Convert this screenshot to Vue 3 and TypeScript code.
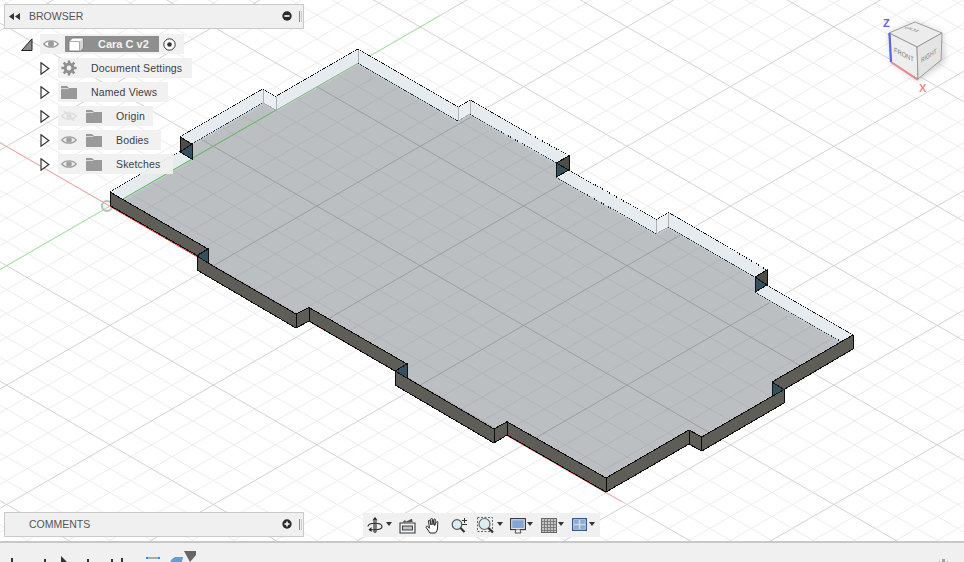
<script setup lang="ts">
const OX = 110
const OY = 206
const K = 59.7 / 103.4
const STEP = (59.7 * 2) / 5

interface GridLine { x1: number; y1: number; x2: number; y2: number; major: boolean }

function buildGrid(): GridLine[] {
  const out: GridLine[] = []
  for (let i = -60; i <= 60; i++) {
    const major = i % 5 === 0
    // goes down to the right
    const a = OY - OX * K + i * STEP
    out.push({ x1: 0, y1: a, x2: 964, y2: a + 964 * K, major })
    // goes up to the right
    const b = OY + OX * K + i * STEP
    out.push({ x1: 0, y1: b, x2: 964, y2: b - 964 * K, major })
  }
  return out
}
const grid = buildGrid()
const minor = grid.filter((l) => !l.major)
const major = grid.filter((l) => l.major)

const face =
  '123,199.5 192,159 192,144 263,103 276,110 358,63 458,121 470,114 556,163 556,177 656,234 668.6,227 755,277 755,292 841,341.5 772,382 772,396.5 701.7,437 689,430 606,478 507,421.7 494,429 407,378 407,364 309,307.5 296,314 208,263 208,249'

const pale = [
  '110,192 180,151.7 192,159 123,199.5',
  '180,137 263,89 263,103 192,144',
  '276,96.5 358,49 358,63 276,110',
  '358,49 458,107 458,121 358,63',
  '470,100 569,156 556,163 470,114',
  '569,170 656,219.5 656,234 556,177',
  '668.6,212.5 767,270 755,277 668.6,227',
  '767,285 853,335 841,341.5 755,292',
]
const paleNotches = [
  '263,89 276,96.5 276,110 263,103',
  '458,107 470,100 470,114 458,121',
  '656,219.5 668.6,212.5 668.6,227 656,234',
]
const walls = [
  '110,192 208,249 197,255.5 110,205.5',
  '197,256 208,263 296,314 296,328 197,270',
  '296,314 309,307.5 309,321 296,328',
  '309,307.5 407,364 395,371 309,321',
  '395,371 407,378 494,429 494,443 395,385',
  '494,429 507,421.7 507,435 494,443',
  '507,421.7 606,478 606,492 507,435',
  '606,478 689,430 689,444 606,492',
  '689,430 701.7,437 701.7,451 689,444',
  '701.7,437 784,389.5 784,403 701.7,451',
  '772,382 853,335 853,349 784,389.5',
]
const darkTris = ['180,137 192,144 180,152', '569,156 569,170 556,163', '767,270 767,285 755,277']
const tealTris = [
  '180,152 192,144 192,159',
  '556,163 569,170 556,177',
  '755,277 767,285 755,292',
  '208,249 208,263 197,256',
  '407,364 407,378 395,371',
  '772,382 784,389.5 772,396.5',
]
const topEdges = [
  '110,192 180,151.7',
  '180,137 263,89 276,96.5 358,49 458,107 470,100 569,156',
  '569,170 656,219.5 668.6,212.5 767,270',
  '767,285 853,335',
]
const lowEdges = [
  '192,144 263,103',
  '358,63 458,121',
  '470,114 556,163',
  '556,177 656,234',
  '668.6,227 755,277',
  '755,292 841,341.5',
]
const notchEdges = [
  '263,89 263,103 276,110 276,96.5',
  '458,107 458,121 470,114 470,100',
  '656,219.5 656,234 668.6,227 668.6,212.5',
  '358,49 358,63',
]

interface TreeRow { label: string; eye?: 'on' | 'off'; icon: 'gear' | 'folder'; pad: number }
const rows: TreeRow[] = [
  { label: 'Document Settings', icon: 'gear', pad: 10 },
  { label: 'Named Views', icon: 'folder', pad: 11 },
  { label: 'Origin', eye: 'off', icon: 'folder', pad: 8 },
  { label: 'Bodies', eye: 'on', icon: 'folder', pad: 12 },
  { label: 'Sketches', eye: 'on', icon: 'folder', pad: 13 },
]
</script>

<template>
  <div class="app">
    <div class="viewport">
      <svg class="scene" width="964" height="541" viewBox="0 0 964 541">
        <defs>
          <clipPath id="faceClip"><polygon :points="face" /></clipPath>
          <filter id="soft" x="-10%" y="-10%" width="120%" height="120%"><feGaussianBlur stdDeviation="1.8" /></filter>
          <filter id="cubeShadow" x="-30%" y="-30%" width="160%" height="160%"><feGaussianBlur stdDeviation="3.5" /></filter>
        </defs>

        <g stroke="#ececec" stroke-width="1">
          <line v-for="(l, i) in minor" :key="'m' + i" :x1="l.x1" :y1="l.y1" :x2="l.x2" :y2="l.y2" />
        </g>
        <g stroke="#d2d2d2" stroke-width="1">
          <line v-for="(l, i) in major" :key="'M' + i" :x1="l.x1" :y1="l.y1" :x2="l.x2" :y2="l.y2" />
        </g>

        <line x1="0" y1="142.800" x2="622" y2="501.900" stroke="#f5a5a5" stroke-width="1" />
        <line x1="0" y1="269.600" x2="440" y2="15.600" stroke="#9fe89f" stroke-width="1" />
        <circle cx="107" cy="206" r="5" fill="none" stroke="#bdbdbd" stroke-width="2.200" />
        <line x1="110" y1="206.300" x2="606" y2="492.500" stroke="#e02020" stroke-width="1" />

        <polygon v-for="p in pale" :key="p" :points="p" fill="#e6ebf0" />
        <polygon v-for="p in paleNotches" :key="p" :points="p" fill="#ebeff2" />

        <polygon :points="face" fill="#bcbfc2" />
        <g clip-path="url(#faceClip)">
          <g stroke="#b1b4b7" stroke-width="1">
            <line v-for="(l, i) in minor" :key="'fm' + i" :x1="l.x1" :y1="l.y1" :x2="l.x2" :y2="l.y2" />
          </g>
          <g stroke="#9b9ea0" stroke-width="1">
            <line v-for="(l, i) in major" :key="'fM' + i" :x1="l.x1" :y1="l.y1" :x2="l.x2" :y2="l.y2" />
          </g>
          <g filter="url(#soft)" opacity="0.65">
            <polygon v-for="p in pale" :key="'b' + p" :points="p" fill="#eef1f4" />
            <polygon v-for="p in paleNotches" :key="'c' + p" :points="p" fill="#eef1f4" />
          </g>
          <line x1="123" y1="197.900" x2="358" y2="63" stroke="#5fc65f" stroke-width="1" />
        </g>
        <line x1="123" y1="198.900" x2="192" y2="159" stroke="#4fc04f" stroke-width="1" />

        <polyline v-for="e in notchEdges" :key="e" :points="e" fill="none" stroke="#aab0b5" stroke-width="1" shape-rendering="crispEdges" />
        <polyline v-for="e in lowEdges" :key="e" :points="e" fill="none" stroke="#14303a" stroke-width="1" stroke-dasharray="1 1" shape-rendering="crispEdges" />
        <polyline v-for="e in topEdges" :key="e" :points="e" fill="none" stroke="#000" stroke-width="1" stroke-dasharray="1 1" shape-rendering="crispEdges" />

        <polygon v-for="p in walls" :key="p" :points="p" fill="#5e5d57" stroke="#0c0c0c" stroke-width="1" stroke-linejoin="bevel" shape-rendering="crispEdges" />
        <polygon v-for="p in darkTris" :key="p" :points="p" fill="#4f4d47" stroke="#0c0c0c" stroke-width="1" shape-rendering="crispEdges" />
        <polygon v-for="p in tealTris" :key="p" :points="p" fill="#37505e" stroke="#0c1418" stroke-width="1" shape-rendering="crispEdges" />

        <!-- view cube -->
        <g>
          <polygon points="892,62 918,80 944,62 942,34 916,22 889,34" fill="#9a9a9a" opacity="0.55" filter="url(#cubeShadow)" />
          <polygon points="915,22 942,33 917,47 889,33" fill="#ececec" stroke="#8c8c8c" stroke-width="0.800" />
          <polygon points="889,33 917,47 918,79 891,62" fill="#eeeeee" stroke="#8c8c8c" stroke-width="0.800" />
          <polygon points="917,47 942,33 941,60 918,79" fill="#e4e4e4" stroke="#8c8c8c" stroke-width="0.800" />
          <text class="cube-text" transform="matrix(-0.95 -0.3 0.75 -0.3 921 30.500)" font-size="7">TOP</text>
          <text class="cube-text" transform="matrix(0.82 0.42 0 1 894 52)" font-size="7">FRONT</text>
          <text class="cube-text" transform="matrix(0.72 -0.46 0 1 921 63)" font-size="7">RIGHT</text>
          <line x1="889.500" y1="33" x2="891" y2="62" stroke="#5b63e8" stroke-width="2.200" />
          <line x1="891" y1="62" x2="918" y2="80" stroke="#e88a8a" stroke-width="2" />
          <text class="axis z" x="883" y="27" font-size="11">Z</text>
          <text class="axis x" x="919" y="92" font-size="11">X</text>
        </g>
      </svg>

      <div class="panel browser-bar">
        <svg class="collapse" width="11" height="7" viewBox="0 0 11 7"><path d="M5 0v7L0 3.500zM11 0v7L6 3.500z" fill="#333" /></svg>
        <span class="panel-title">BROWSER</span>
        <svg class="round-btn" width="10" height="10" viewBox="0 0 10 10"><circle cx="5" cy="5" r="4.700" fill="#2b2b2b" /><rect x="2.400" y="4.200" width="5.200" height="1.600" fill="#fff" /></svg>
        <span class="grip"></span>
      </div>

      <div class="tree">
        <div class="tree-root">
          <svg class="root-toggle" width="12" height="13" viewBox="0 0 12 13"><path d="M11 .8v11.700H.6z" fill="#8a8a8a" stroke="#222" stroke-width="1" /></svg>
          <div class="root-box">
            <svg class="eye" width="16" height="10" viewBox="0 0 16 10"><path d="M.8 5C4 .8 12 .8 15.200 5 12 9.200 4 9.200.8 5z" fill="#fff" stroke="#9a9a9a" stroke-width="1.400" /><circle cx="8" cy="5" r="3" fill="#9a9a9a" /></svg>
            <div class="root-label">
              <svg width="16" height="15" viewBox="0 0 16 15"><path d="M1 4.500 4.500 1H15v10l-3 3H2a1 1 0 0 1-1-1z" fill="#fff" stroke="#777" stroke-width=".8" /><path d="M11.500 4.500 15 1v10l-3 3z" fill="#d6d6d6" /><path d="M1 4.500h10.500V14" fill="none" stroke="#999" stroke-width=".8" /></svg>
              <span>Cara C v2</span>
            </div>
            <svg class="radio" width="13" height="13" viewBox="0 0 13 13"><circle cx="6.500" cy="6.500" r="5.700" fill="#fff" stroke="#333" stroke-width="1" /><circle cx="6.500" cy="6.500" r="2.300" fill="#333" /></svg>
          </div>
        </div>

        <div v-for="row in rows" :key="row.label" class="tree-row">
          <svg class="expander" width="10" height="13" viewBox="0 0 10 13"><path d="M1 .8 8.800 6.500 1 12.200z" fill="#fff" stroke="#333" stroke-width="1.200" /></svg>
          <div class="row-box" :style="{ paddingRight: row.pad + 'px' }">
            <svg v-if="row.eye === 'on'" class="slot" width="16" height="10" viewBox="0 0 16 10"><path d="M.8 5C4 .8 12 .8 15.200 5 12 9.200 4 9.200.8 5z" fill="#eee" stroke="#a0a0a0" stroke-width="1.400" /><circle cx="8" cy="5" r="2.800" fill="#a0a0a0" /></svg>
            <svg v-else-if="row.eye === 'off'" class="slot" width="16" height="12" viewBox="0 0 16 12"><path d="M.8 6C4 1.800 12 1.800 15.200 6 12 10.200 4 10.200.8 6z" fill="none" stroke="#dcdcdc" stroke-width="1.400" /><circle cx="8" cy="6" r="2.500" fill="#dcdcdc" /><path d="M3 1l10 10" stroke="#dcdcdc" stroke-width="1.300" /></svg>
            <svg v-if="row.icon === 'gear'" class="slot" width="16" height="16" viewBox="0 0 16 16">
              <circle cx="8" cy="8" r="3.900" fill="none" stroke="#8f8f8f" stroke-width="3" />
              <path d="M8 .4v15.200M.4 8h15.200M2.600 2.600l10.800 10.800M13.400 2.600 2.600 13.400" stroke="#8f8f8f" stroke-width="2.600" stroke-dasharray="2.600 10" />
            </svg>
            <svg v-else class="slot" width="16" height="13" viewBox="0 0 16 13"><path d="M0 0h6l2 2h8v11H0z" fill="#999" /><path d="M0 2.600h7.500" stroke="#eee" stroke-width=".8" /></svg>
            <span class="row-label">{{ row.label }}</span>
          </div>
        </div>
      </div>

      <div class="panel comments-bar">
        <span class="panel-title">COMMENTS</span>
        <svg class="round-btn" width="10" height="10" viewBox="0 0 10 10"><circle cx="5" cy="5" r="4.700" fill="#2b2b2b" /><path d="M2.400 5h5.200M5 2.400v5.200" stroke="#fff" stroke-width="1.500" /></svg>
        <span class="grip"></span>
      </div>

      <div class="toolbar">
        <svg width="16" height="17" viewBox="0 0 16 17" class="t-orbit"><path d="M8 1v15M6 3.500 8 .8l2 2.700M1 9.500c0-2 3-3.300 7-3.300s7 1.300 7 3.300-3 3.200-7 3.200H3.500" fill="none" stroke="#222" stroke-width="1.100" /><path d="M4.500 10 1.500 12.700l3 2.300z" fill="#222" /><path d="M6.600 4v11h2.800V4" fill="none" stroke="#555" stroke-width=".8" /></svg>
        <i class="caret c1"></i>
        <svg width="17" height="16" viewBox="0 0 17 16" class="t-look"><path d="M1 5h15v10H1z" fill="#f2f2f2" stroke="#3a3a3a" stroke-width="1.100" /><rect x="3.500" y="8" width="10" height="4" fill="#b9c3cc" stroke="#333" stroke-width=".9" /><path d="M3 4.500 6 2l1 1.500L13 .8l.7 3.200z" fill="#555" /></svg>
        <svg width="17" height="16" viewBox="0 0 17 16" class="t-hand"><path d="M5 15 1.200 9.500c-.6-1 .7-1.700 1.400-1l1.800 1.700L3.500 3c-.1-1.200 1.400-1.200 1.600 0l1 4-.3-5.700c0-1.300 1.600-1.300 1.700 0l.5 5.500.8-5c.2-1.200 1.700-1 1.500.2l-.7 5.500 1.800-3.500c.6-1 1.800-.5 1.400.6L12.500 11c-.4 1.500-1 2.700-2 4z" fill="#fff" stroke="#222" stroke-width="1" stroke-linejoin="round" /></svg>
        <svg width="17" height="16" viewBox="0 0 17 16" class="t-zoom"><circle cx="6" cy="7.500" r="4.800" fill="#d9edf2" stroke="#555" stroke-width="1.200" /><path d="M9.500 11l4 4" stroke="#333" stroke-width="2.200" /><path d="M11 3.500h5M13.500 1v5M11 7.500h5" stroke="#333" stroke-width="1" /></svg>
        <svg width="17" height="17" viewBox="0 0 17 17" class="t-fit"><rect x=".5" y=".5" width="15" height="14" fill="none" stroke="#666" stroke-width="1" stroke-dasharray="2 1.500" /><circle cx="7.500" cy="7" r="5.500" fill="#dceef3" stroke="#666" stroke-width="1.200" /><path d="M11.500 11l4.500 4.500" stroke="#333" stroke-width="2.200" /></svg>
        <i class="caret c2"></i>
        <svg width="16" height="16" viewBox="0 0 16 16" class="t-screen"><rect x=".6" y=".6" width="14.800" height="11" fill="#e4e6ea" stroke="#333" stroke-width="1.100" /><rect x="2.200" y="2.200" width="11.600" height="7.800" fill="#86a6d6" /><path d="M6 11.600 5 15h6l-1-3.400" fill="#eee" stroke="#444" stroke-width=".9" /></svg>
        <i class="caret c3"></i>
        <svg width="16" height="15" viewBox="0 0 16 15" class="t-grid"><rect x=".5" y=".5" width="15" height="14" fill="#c4c4c4" stroke="#666" stroke-width="1" /><path d="M3.500 0v15M6.500 0v15M9.500 0v15M12.500 0v15M0 3.500h16M0 6.500h16M0 9.500h16M0 12.500h16" stroke="#707070" stroke-width=".8" /></svg>
        <i class="caret c4"></i>
        <svg width="15" height="13" viewBox="0 0 15 13" class="t-views"><rect x=".6" y=".6" width="13.800" height="11.800" fill="#ccd8e8" stroke="#34588c" stroke-width="1.200" /><rect x="2.200" y="2" width="4.400" height="3.800" fill="#8ca9d2" /><rect x="8.400" y="2" width="4.400" height="3.800" fill="#8ca9d2" /><rect x="2.200" y="7.300" width="4.400" height="3.800" fill="#8ca9d2" /><rect x="8.400" y="7.300" width="4.400" height="3.800" fill="#8ca9d2" /></svg>
        <i class="caret c5"></i>
      </div>
    </div>

    <div class="timeline">
      <svg class="transport" width="200" height="19" viewBox="0 0 200 19">
        <g fill="#333">
          <rect x="11" y="15" width="2" height="4" />
          <rect x="44" y="16" width="2" height="3" />
          <path d="M61 13l6 6h-6z" />
          <rect x="87" y="16" width="2" height="3" />
          <rect x="111" y="16" width="2" height="3" />
          <rect x="121" y="15" width="2" height="4" />
        </g>
        <path d="M148 15h11" stroke="#666" stroke-width="1" />
        <rect x="146" y="14" width="2" height="2" fill="#1e90ff" />
        <rect x="158" y="14" width="2" height="2" fill="#1e90ff" />
        <path d="M170 19l2-3 3-2h8l-1 5z" fill="#5f9fdc" />
        <path d="M184 8h12v4l-6 7z" fill="#666" />
      </svg>
      <svg class="tl-gear" width="11" height="3" viewBox="0 0 11 3"><path d="M1 3V2h1v1zM4 3V0h3v3zM9 3V2h1v1z" fill="#a0a0a0" /></svg>
    </div>
  </div>
</template>

<style scoped>
.app {
  width: 964px; height: 562px;
  display: flex; flex-direction: column;
  overflow: hidden;
  background: #fff;
  font-family: "Liberation Sans", Arial, sans-serif;
}
.viewport { position: relative; height: 541px; flex-shrink: 0; overflow: hidden; }
.scene { position: absolute; left: 0; top: 0; display: block; }
.cube-text { fill: #7c7c7c; font-family: "Liberation Sans", Arial, sans-serif; }
.axis { font-family: "Liberation Sans", Arial, sans-serif; font-weight: 700; }
.axis.z { fill: #5b63e8; }
.axis.x { fill: #ea8f8f; }

.panel {
  position: absolute; left: 4px; width: 300px; height: 25px;
  box-sizing: border-box;
  display: flex; align-items: center;
  padding-bottom: 2px;
  background: #f0f0f0; border: 1px solid #cacaca;
}
.browser-bar { top: 4px; }
.comments-bar { top: 512px; }
.collapse { position: absolute; left: 4px; top: 8px; }
.panel-title { margin-left: 24px; font-size: 10.500px; color: #555; }
.round-btn { position: absolute; left: 277px; top: 6px; }
.grip { position: absolute; left: 294px; top: 6px; width: 1px; height: 11px; border-left: 1px solid #888; border-right: 1px solid #ccc; }

.tree { position: absolute; left: 21px; top: 34px; display: flex; flex-direction: column; gap: 4px; }
.tree-root { display: flex; align-items: center; height: 20px; }
.root-toggle { margin-right: 7px; }
.root-box { display: flex; align-items: center; height: 20px; width: 144px; background: rgba(240,240,240,.92); }
.eye { margin-left: 3px; }
.root-label {
  display: flex; align-items: center;
  margin-left: 6px; width: 94px; height: 16px;
  background: #8f8f8f;
}
.root-label svg { margin-left: 3px; }
.root-label span { margin-left: 14px; font-size: 11px; font-weight: 700; color: #f4f4f4; white-space: nowrap; }
.radio { margin-left: 4px; }

.tree-row { display: flex; align-items: center; height: 20px; margin-left: 19px; }
.expander { flex-shrink: 0; }
.row-box {
  display: flex; align-items: center; height: 20px;
  margin-left: 8px; padding-left: 3px;
  background: rgba(240,240,240,.92);
}
.slot { flex-shrink: 0; margin-right: 9px; }
.row-label { margin-left: 5px; font-size: 10.500px; color: #3c4048; white-space: nowrap; letter-spacing: .15px; }

.toolbar {
  position: absolute; left: 363px; top: 513px;
  width: 237px; height: 24px;
  background: #f0f0f0;
}
.toolbar svg { position: absolute; }
.t-orbit { left: 4px; top: 4px; }
.t-look { left: 36px; top: 5px; }
.t-hand { left: 62px; top: 5px; }
.t-zoom { left: 88px; top: 4px; }
.t-fit { left: 114px; top: 4px; }
.t-screen { left: 147px; top: 5px; }
.t-grid { left: 178px; top: 5px; }
.t-views { left: 209px; top: 5px; }
.caret { position: absolute; top: 9px; width: 0; height: 0; border-left: 3.500px solid transparent; border-right: 3.500px solid transparent; border-top: 4px solid #333; }
.c1 { left: 23px; }
.c2 { left: 134px; }
.c3 { left: 164px; }
.c4 { left: 195px; }
.c5 { left: 226px; }

.timeline {
  height: 21px; flex-shrink: 0;
  box-sizing: border-box;
  display: flex; align-items: flex-end; justify-content: space-between;
  background: #f0f0f0; border-top: 2px solid #c8c8c8;
}
.transport { display: block; }
.tl-gear { display: block; margin-right: 15px; }
</style>
